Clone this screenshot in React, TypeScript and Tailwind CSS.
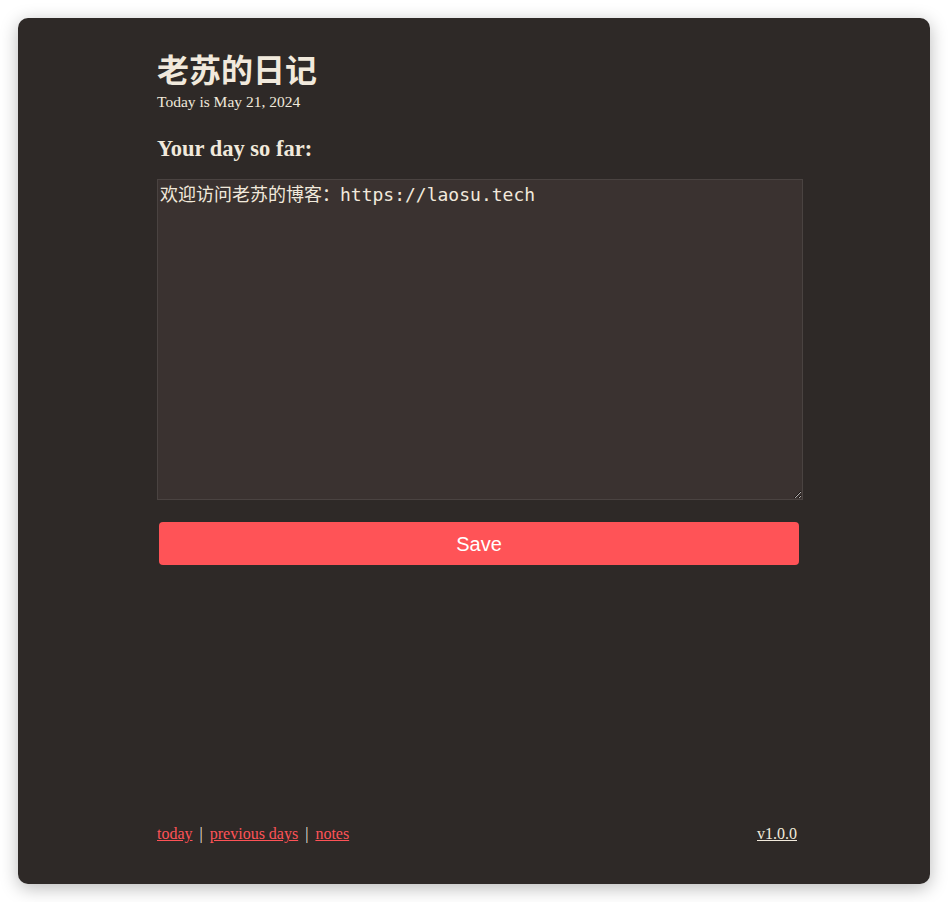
export default function App() {
  return (
    <div className="min-h-screen bg-white p-[18px]">
      <div
        className="flex h-[866px] flex-col rounded-[10px] bg-[#2e2927] text-[#f1e9dc] shadow-[0_4px_18px_rgba(0,0,0,0.28)]"
        style={{ fontFamily: '"Liberation Serif", "Noto Sans CJK SC", serif' }}
      >
        <main className="ml-[139px] w-[646px] pt-[32px]">
          <h1 className="text-[32px] font-bold leading-[42px]">老苏的日记</h1>
          <p className="text-[15.5px] leading-[19px]">Today is May 21, 2024</p>
          <h2 className="mt-[25px] text-[22.5px] font-bold leading-[26px]">Your day so far:</h2>
          <textarea
            className="mt-[17px] block h-[321px] w-full resize-y border border-[#4a4341] bg-[#3a3230] px-[2px] py-[2px] text-[18px] leading-[26px] text-[#f1e9dc] outline-none"
            style={{ fontFamily: '"DejaVu Sans Mono", "Noto Sans CJK SC", monospace' }}
            defaultValue="欢迎访问老苏的博客：https://laosu.tech"
          />
          <button
            className="mx-[2px] mt-[22px] block h-[43px] w-[640px] rounded-[4px] bg-[#ff5357] text-[20px] text-white"
            style={{ fontFamily: '"Liberation Sans", Arial, sans-serif' }}
          >
            Save
          </button>
        </main>
        <footer className="mt-auto mb-[40px] ml-[139px] flex w-[640px] items-center justify-between text-[16px] leading-[20px]">
          <div className="flex items-center gap-[7px]">
            <a href="#" className="text-[#ff5357] underline">today</a>
            <span>|</span>
            <a href="#" className="text-[#ff5357] underline">previous days</a>
            <span>|</span>
            <a href="#" className="text-[#ff5357] underline">notes</a>
          </div>
          <a href="#" className="underline">v1.0.0</a>
        </footer>
      </div>
    </div>
  );
}
